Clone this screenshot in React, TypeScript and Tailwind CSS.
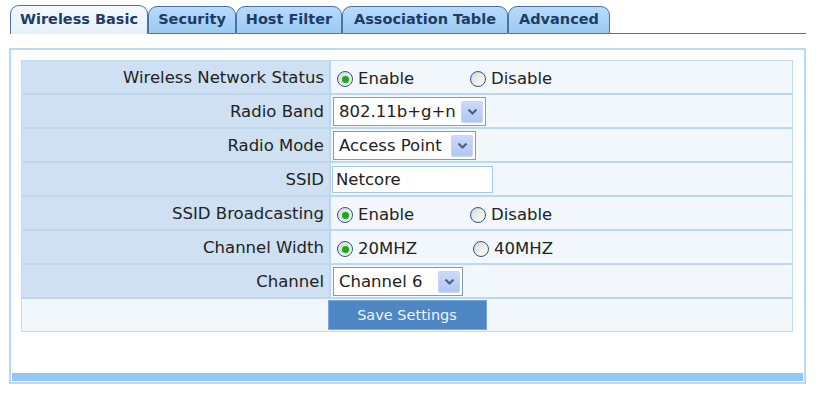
import React from "react";

const font = { fontFamily: "Tahoma, 'DejaVu Sans', Verdana, sans-serif" };

function Radio({ checked }: { checked?: boolean }) {
  return (
    <span className="relative inline-flex w-[16px] h-[16px] rounded-full border border-[#28588a] bg-gradient-to-br from-[#d6d6cf] via-[#eeeeea] to-[#ffffff] items-center justify-center shrink-0">
      {checked && <span className="w-[7px] h-[7px] rounded-full bg-[#22a422] shadow-[0_0_2px_#7fe07f]" />}
    </span>
  );
}

function RadioPair({ a, b, wa }: { a: string; b: string; wa: number }) {
  return (
    <div className="flex items-center pl-[6px] pt-[4px]">
      <label className="flex items-center gap-[5px]" style={{ width: wa }}>
        <Radio checked />
        <span>{a}</span>
      </label>
      <label className="flex items-center gap-[5px]">
        <Radio />
        <span>{b}</span>
      </label>
    </div>
  );
}

function Select({ value, w }: { value: string; w: number }) {
  return (
    <div
      className="flex items-center h-[29px] border border-[#7f9db9] bg-white pl-[5px] pr-[2px] justify-between ml-[2px] mt-[1px]"
      style={{ width: w }}
    >
      <span className="pt-[2px]">{value}</span>
      <span className="w-[22px] h-[22px] bg-gradient-to-b from-[#cbdafc] to-[#b2c6f4] border border-[#c8d6f6] flex items-center justify-center rounded-[2px]">
        <svg width="11" height="8" viewBox="0 0 11 8">
          <path d="M1.5 1.5 L5.5 5.5 L9.5 1.5" fill="none" stroke="#4d6185" strokeWidth="2.2" />
        </svg>
      </span>
    </div>
  );
}

const rows: { label: string; content: React.ReactNode }[] = [
  { label: "Wireless Network Status", content: <RadioPair a="Enable" b="Disable" wa={133} /> },
  { label: "Radio Band", content: <Select value="802.11b+g+n" w={153} /> },
  { label: "Radio Mode", content: <Select value="Access Point" w={143} /> },
  {
    label: "SSID",
    content: (
      <div className="ml-[1px] mt-[1px] w-[161px] h-[27px] border border-[#a4c9ec] bg-white flex items-center pl-[3px] pt-[2px]">
        Netcore
      </div>
    ),
  },
  { label: "SSID Broadcasting", content: <RadioPair a="Enable" b="Disable" wa={133} /> },
  { label: "Channel Width", content: <RadioPair a="20MHZ" b="40MHZ" wa={136} /> },
  { label: "Channel", content: <Select value="Channel 6" w={130} /> },
];

const tabs: [string, number][] = [
  ["Wireless Basic", 138],
  ["Security", 88],
  ["Host Filter", 106],
  ["Association Table", 166],
  ["Advanced", 102],
];

export default function App() {
  return (
    <div className="w-[817px] h-[396px] bg-white text-[#222]" style={font}>
      <div className="flex items-end h-[34px] pt-[5px] pl-[10px] pr-[11px]">
        {tabs.map(([t, w], i) => (
          <div
            key={t}
            style={{ width: w }}
            className={
              i === 0
                ? "h-[29px] flex items-center justify-center pb-[1px] rounded-t-[9px] border border-b-0 border-[#4f6fa6] bg-gradient-to-b from-[#f4f9fe] to-[#e4f0fb] text-[#1e3c66] font-bold text-[14.5px]"
                : "h-[28px] flex items-center justify-center rounded-t-[9px] border border-[#4f6fa6] bg-gradient-to-b from-[#b6dbfa] to-[#9ccaf3] text-[#1e3c66] font-bold text-[14.5px]"
            }
          >
            {t}
          </div>
        ))}
        <div className="flex-1 border-b border-[#4f6fa6]" />
      </div>

      <div className="mt-[14px] ml-[9px] w-[797px] h-[336px] border-2 border-[#b6daf8] flex flex-col">
        <div className="flex-1 pt-[10px] pl-[10px] pr-[11px]">
          <div className="grid grid-cols-[307px_1fr] gap-[2px] bg-[#bcd7f0] border border-[#c4dcf2]">
            {rows.map((r) => (
              <React.Fragment key={r.label}>
                <div className="h-[32px] bg-[#cee0f1] flex items-center justify-end pr-[5px] pt-[3px] text-[16.5px]">
                  {r.label}
                </div>
                <div className="h-[32px] bg-[#f2f7fc] flex items-center text-[16.5px]">{r.content}</div>
              </React.Fragment>
            ))}
            <div className="col-span-2 h-[32px] bg-[#f2f7fc] flex justify-center">
              <button className="w-[159px] h-[30px] mt-[1px] pt-[1px] bg-[#4f86c4] border border-[#78a7dc] text-[#eef4fb] text-[14.5px]">
                Save Settings
              </button>
            </div>
          </div>
        </div>
        <div className="h-[8px] mx-[1px] mb-[1px] bg-[#93c7f6]" />
      </div>
    </div>
  );
}
